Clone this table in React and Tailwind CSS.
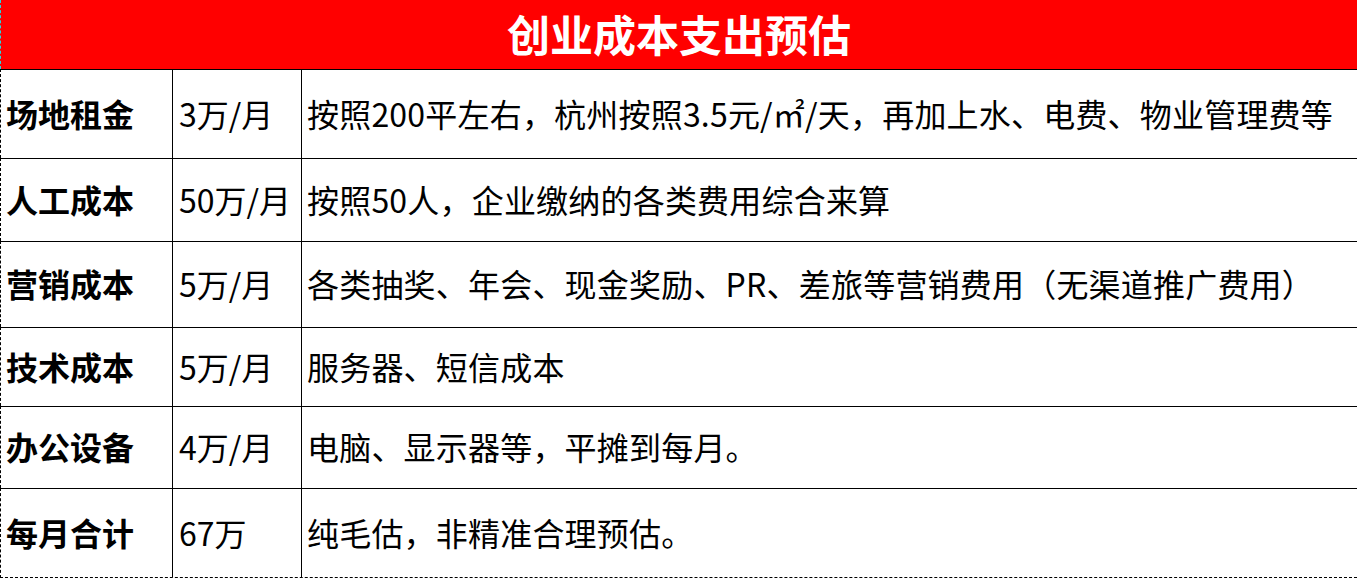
import React from 'react';

const rows = [
  { name: '场地租金', cost: '3万/月', note: '按照200平左右，杭州按照3.5元/㎡/天，再加上水、电费、物业管理费等', h: 'h-[89px]' },
  { name: '人工成本', cost: '50万/月', note: '按照50人，企业缴纳的各类费用综合来算', h: 'h-[83px]' },
  { name: '营销成本', cost: '5万/月', note: '各类抽奖、年会、现金奖励、PR、差旅等营销费用（无渠道推广费用）', h: 'h-[86px]' },
  { name: '技术成本', cost: '5万/月', note: '服务器、短信成本', h: 'h-[79px]' },
  { name: '办公设备', cost: '4万/月', note: '电脑、显示器等，平摊到每月。', h: 'h-[82px]' },
  { name: '每月合计', cost: '67万', note: '纯毛估，非精准合理预估。', h: 'h-[90px] border-b border-b-black [border-bottom-style:dashed]' },
];

const App = () => {
  return (
    <div
      className="w-[1357px] h-[579px] bg-white text-black overflow-hidden"
      style={{ fontFamily: '"Microsoft YaHei", "Noto Sans CJK SC", "Noto Sans", sans-serif' }}
    >
      {/* title bar */}
      <div className="h-[69px] bg-[#ff0000] border-l border-dashed border-[#29d6e0] flex items-center justify-center pb-[2px]">
        <span className="text-white font-bold text-[43px] leading-none">创业成本支出预估</span>
      </div>

      {rows.map((r, i) => (
        <div key={i} className={`flex border-t border-t-black border-l border-l-black [border-left-style:dashed] ${r.h}`}>
          <div className="w-[172px] shrink-0 border-r border-black flex items-center pl-[5px] pb-[3px] text-[32px] font-bold whitespace-nowrap">
            {r.name}
          </div>
          <div className="w-[129px] shrink-0 border-r border-black flex items-center pl-[6px] pb-[3px] text-[32px] whitespace-nowrap">
            {r.cost}
          </div>
          <div className="flex-1 flex items-center pl-[5px] pb-[3px] text-[32px] tracking-[0.2px] whitespace-nowrap">
            {r.note}
          </div>
        </div>
      ))}
    </div>
  );
};

export default App;
